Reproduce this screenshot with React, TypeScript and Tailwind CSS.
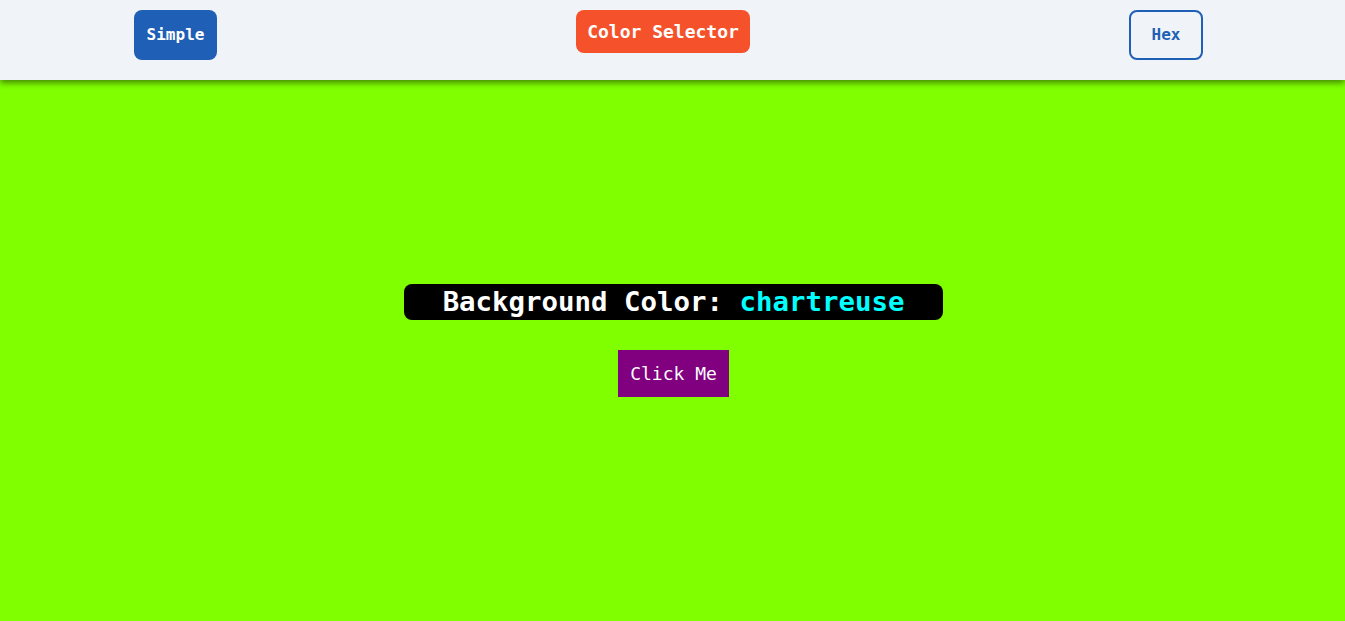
import { useState } from "react";

const colors = ["chartreuse", "tomato", "gold", "skyblue", "orchid"];

export default function App() {
  const [index, setIndex] = useState(0);
  const color = colors[index];

  return (
    <div
      className="flex min-h-[621px] flex-col"
      style={{ fontFamily: '"DejaVu Sans Mono", "Liberation Mono", monospace', backgroundColor: color }}
    >
      <header className="relative z-10 flex h-20 items-start justify-between bg-[#f0f4f8] pl-[134px] pr-[142px] pt-[10px] shadow-[0_3px_6px_rgba(0,0,0,0.45)]">
        <button className="h-[50px] w-[83px] rounded-lg bg-[#1f5fb5] text-[16px] font-bold text-white">
          Simple
        </button>
        <button className="mr-5 h-[43px] w-[174px] rounded-lg bg-[#f5522c] text-[18px] font-bold text-white">
          Color Selector
        </button>
        <button className="h-[50px] w-[74px] rounded-lg border-2 border-[#1f5fb5] bg-[#f0f4f8] text-[16px] font-bold text-[#1f5fb5]">
          Hex
        </button>
      </header>

      <main className="flex flex-1 flex-col items-center justify-center gap-[30px] pb-5 pl-[2px]">
        <h1 className="flex h-9 w-[539px] items-center justify-center rounded-lg bg-black text-[27.4px] font-bold leading-none text-white">
          Background Color:&nbsp;<span className="text-[#00ffff]">{color}</span>
        </h1>
        <button
          onClick={() => setIndex((index + 1) % colors.length)}
          className="h-[47px] w-[111px] bg-[#800080] text-[18px] text-white"
        >
          Click Me
        </button>
      </main>
    </div>
  );
}
